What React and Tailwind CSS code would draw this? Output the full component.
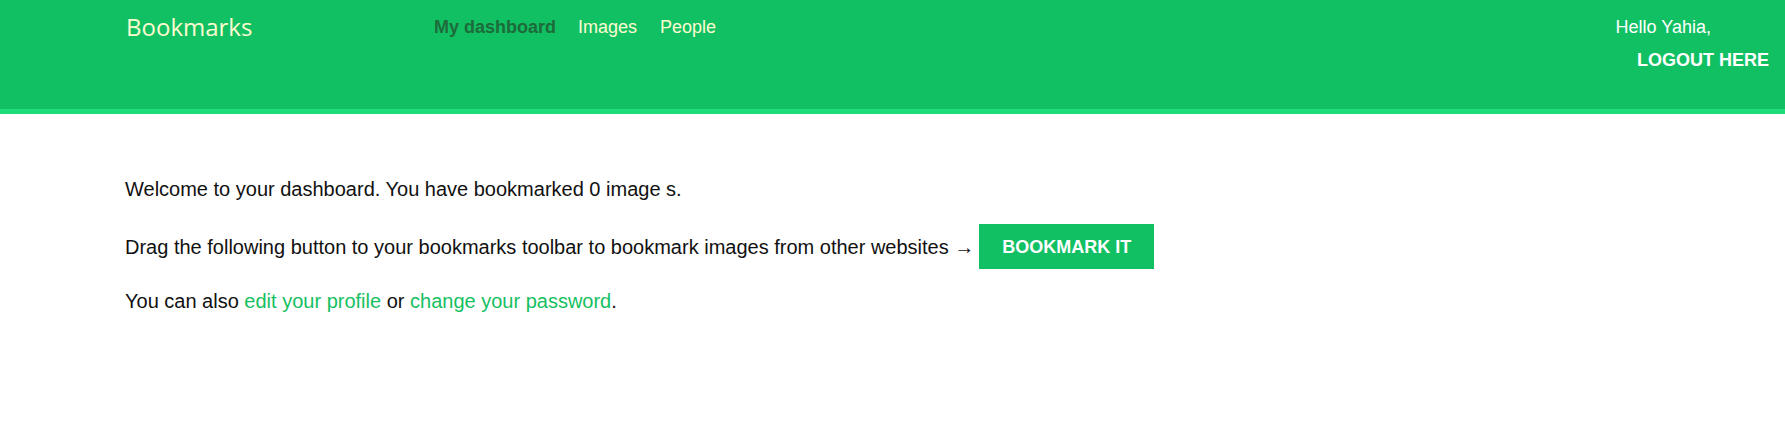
export default function App() {
  return (
    <div className="min-h-screen bg-white font-['Liberation_Sans',Arial,sans-serif]">
      {/* header */}
      <header className="h-[114px] bg-[#12c064] border-b-[5px] border-[#1fdc7a] flex items-start pl-[126px] pr-[16px]">
        <a href="#" className="mt-[11px] text-[24px] leading-[32px] text-[#fcfbd0] font-['Open_Sans',sans-serif] w-[308px]">
          Bookmarks
        </a>
        <nav className="mt-[17px] flex text-[18px] leading-[20px]">
          <a href="#" className="font-bold text-[#1d6b3a]">My dashboard</a>
          <a href="#" className="ml-[22px] text-[#fcfbd0]">Images</a>
          <a href="#" className="ml-[23px] text-[#fcfbd0]">People</a>
        </nav>
        <div className="ml-auto mt-[17px] flex flex-col items-end text-white text-[18px] leading-[20px]">
          <span className="mr-[58px]">Hello Yahia,</span>
          <a href="#" className="mt-[13px] font-bold uppercase">Logout here</a>
        </div>
      </header>

      {/* content */}
      <main className="pl-[125px] pt-[63px] text-[20px] leading-[24px] text-[#111]">
        <p>Welcome to your dashboard. You have bookmarked 0 image s.</p>
        <div className="mt-[23px] flex items-center">
          <span>Drag the following button to your bookmarks toolbar to bookmark images from other websites →</span>
          <a href="#" className="ml-[5px] h-[45px] w-[175px] bg-[#12c064] text-white font-bold text-[18px] flex items-center justify-center">
            BOOKMARK IT
          </a>
        </div>
        <p className="mt-[20px]">
          You can also <a href="#" className="text-[#16bf62]">edit your profile</a> or{" "}
          <a href="#" className="text-[#16bf62]">change your password</a>.
        </p>
      </main>
    </div>
  );
}
